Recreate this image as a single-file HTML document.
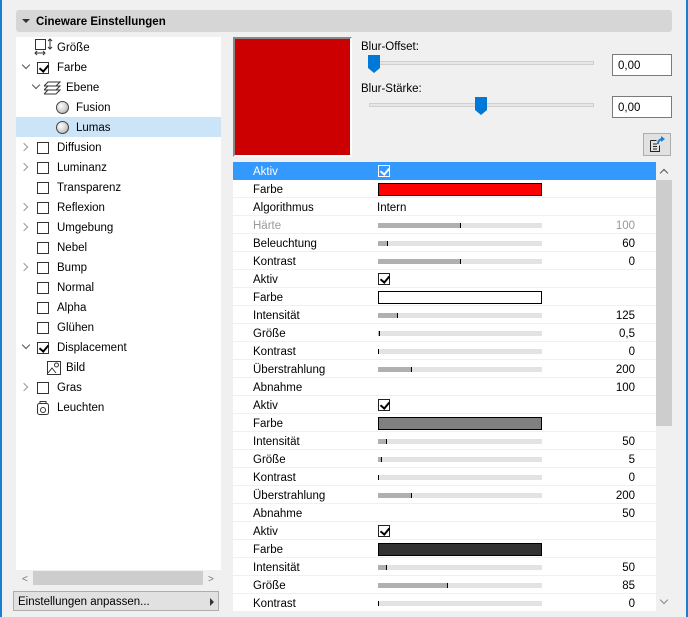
<!DOCTYPE html>
<html><head><meta charset="utf-8"><style>
*{margin:0;padding:0;box-sizing:border-box}
body{width:688px;height:617px;background:#f0f0f0;font-family:"Liberation Sans",sans-serif;font-size:11.5px;color:#000;position:relative;overflow:hidden}
.a{position:absolute}
.t{position:absolute;left:0;height:20px;line-height:22px;width:205px}
.cb{position:absolute;width:12px;height:12px;border:1px solid #333;background:#fff;top:5px}
.cb.c::after{content:"";position:absolute;left:3px;top:0px;width:4px;height:7px;border:solid #000;border-width:0 2px 2px 0;transform:rotate(40deg)}
.ar{position:absolute;top:7px;width:6px;height:6px;border:solid #999;border-width:0 1.5px 1.5px 0}
.r{position:absolute;left:0;width:423px;height:18px;line-height:20px;border-bottom:1px solid #f0f0f0}
.r .l{position:absolute;left:20px}
.r .n{position:absolute;right:21px}
.sl{position:absolute;left:145px;top:7px;width:164px;height:5px;background:#e3e3e3}
.sl i{position:absolute;left:0;top:0;height:5px;background:#b0b0b0;border-right:1px solid #000}
.cbs{position:absolute;left:145px;top:3px;width:12px;height:12px;border:1px solid #222;background:#fff}
.cbs::after{content:"";position:absolute;left:3px;top:0;width:4px;height:7px;border:solid #000;border-width:0 2px 2px 0;transform:rotate(40deg)}
.cbs.w{background:transparent;border-color:#fff}
.cbs.w::after{border-color:#fff}
.sw{position:absolute;left:145px;top:3px;width:164px;height:13px;border:1px solid #000}
</style></head><body>
<div class="a" style="left:0;top:0;width:2px;height:617px;background:#1a7fd4"></div>
<div class="a" style="left:686px;top:0;width:2px;height:617px;background:#1a7fd4"></div>
<div class="a" style="left:16px;top:10px;width:656px;height:22px;background:#d6d6d6;border-radius:3px"></div>
<div class="a" style="left:22px;top:19px;width:0;height:0;border-left:4px solid transparent;border-right:4px solid transparent;border-top:4px solid #333"></div>
<div class="a" style="left:36px;top:14px;font-weight:bold;line-height:16px">Cineware Einstellungen</div>

<div class="a" style="left:16px;top:37px;width:205px;height:533px;background:#fff">
<div class="t" style="top:0"><svg class="a" style="left:18px;top:1px" width="20" height="18"><rect x="1.5" y="1.5" width="10" height="10" fill="none" stroke="#333"/><path d="M16 1v10M14 3l2-2 2 2M14 9l2 2 2-2M1 15h10M3 13l-2 2 2 2M9 13l2 2-2 2" stroke="#333" fill="none"/></svg><span class="a" style="left:41px">Größe</span></div>
<div class="t" style="top:20px"><i class="ar" style="left:7px;top:5px;transform:rotate(45deg);border-color:#555"></i><i class="cb c" style="left:21px"></i><span class="a" style="left:41px">Farbe</span></div>
<div class="t" style="top:40px"><i class="ar" style="left:17px;top:5px;transform:rotate(45deg);border-color:#555"></i><svg class="a" style="left:28px;top:4px" width="18" height="14"><path d="M4 1h12l-4 4H0zM4 5h12l-4 4H0zM4 9h12l-4 4H0z" fill="#fff" stroke="#333"/></svg><span class="a" style="left:50px">Ebene</span></div>
<div class="t" style="top:60px"><i class="a" style="left:40px;top:4px;width:13px;height:13px;border-radius:50%;border:1px solid #444;background:radial-gradient(circle at 35% 35%,#fff,#ccc 60%,#888)"></i><span class="a" style="left:60px">Fusion</span></div>
<div class="t" style="top:80px;background:#cce4f7"><i class="a" style="left:40px;top:4px;width:13px;height:13px;border-radius:50%;border:1px solid #444;background:radial-gradient(circle at 35% 35%,#fff,#ccc 60%,#888)"></i><span class="a" style="left:60px">Lumas</span></div>
<div class="t" style="top:100px"><i class="ar" style="left:5px;transform:rotate(-45deg)"></i><i class="cb" style="left:21px"></i><span class="a" style="left:41px">Diffusion</span></div>
<div class="t" style="top:120px"><i class="ar" style="left:5px;transform:rotate(-45deg)"></i><i class="cb" style="left:21px"></i><span class="a" style="left:41px">Luminanz</span></div>
<div class="t" style="top:140px"><i class="cb" style="left:21px"></i><span class="a" style="left:41px">Transparenz</span></div>
<div class="t" style="top:160px"><i class="ar" style="left:5px;transform:rotate(-45deg)"></i><i class="cb" style="left:21px"></i><span class="a" style="left:41px">Reflexion</span></div>
<div class="t" style="top:180px"><i class="ar" style="left:5px;transform:rotate(-45deg)"></i><i class="cb" style="left:21px"></i><span class="a" style="left:41px">Umgebung</span></div>
<div class="t" style="top:200px"><i class="cb" style="left:21px"></i><span class="a" style="left:41px">Nebel</span></div>
<div class="t" style="top:220px"><i class="ar" style="left:5px;transform:rotate(-45deg)"></i><i class="cb" style="left:21px"></i><span class="a" style="left:41px">Bump</span></div>
<div class="t" style="top:240px"><i class="cb" style="left:21px"></i><span class="a" style="left:41px">Normal</span></div>
<div class="t" style="top:260px"><i class="cb" style="left:21px"></i><span class="a" style="left:41px">Alpha</span></div>
<div class="t" style="top:280px"><i class="cb" style="left:21px"></i><span class="a" style="left:41px">Glühen</span></div>
<div class="t" style="top:300px"><i class="ar" style="left:7px;top:5px;transform:rotate(45deg);border-color:#555"></i><i class="cb c" style="left:21px"></i><span class="a" style="left:41px">Displacement</span></div>
<div class="t" style="top:320px"><svg class="a" style="left:30px;top:3px" width="16" height="16"><rect x="1.5" y="1.5" width="13" height="13" fill="#fff" stroke="#333"/><circle cx="10.5" cy="5" r="2" fill="none" stroke="#333"/><path d="M2 13l4-5 4 5" fill="none" stroke="#333"/></svg><span class="a" style="left:50px">Bild</span></div>
<div class="t" style="top:340px"><i class="ar" style="left:5px;transform:rotate(-45deg)"></i><i class="cb" style="left:21px"></i><span class="a" style="left:41px">Gras</span></div>
<div class="t" style="top:360px"><svg class="a" style="left:20px;top:3px" width="14" height="16"><rect x="1.5" y="3.5" width="11" height="11" rx="2" fill="#fff" stroke="#333"/><path d="M4 3.5V1.5h6v2" fill="none" stroke="#333"/><circle cx="7" cy="10" r="2.5" fill="none" stroke="#333"/></svg><span class="a" style="left:41px">Leuchten</span></div>
</div>
<div class="a" style="left:16px;top:570px;width:205px;height:16px;background:#f0f0f0"></div>
<div class="a" style="left:33px;top:571px;width:170px;height:14px;background:#cdcdcd"></div>
<div class="a" style="left:22px;top:575px;color:#777;font-size:10px;line-height:10px">&lt;</div>
<div class="a" style="left:208px;top:575px;color:#777;font-size:10px;line-height:10px">&gt;</div>
<div class="a" style="left:13px;top:591px;width:206px;height:20px;background:#e1e1e1;border:1px solid #adadad;line-height:20px;padding-left:4px">Einstellungen anpassen...</div>
<div class="a" style="left:210px;top:598px;width:0;height:0;border-top:4px solid transparent;border-bottom:4px solid transparent;border-left:4px solid #333"></div>

<div class="a" style="left:233px;top:37px;width:119px;height:120px;background:#cc0000;border:2px solid #888;border-right-color:#fff;border-bottom-color:#fff"></div>
<div class="a" style="left:361px;top:40px;line-height:14px">Blur-Offset:</div>
<div class="a" style="left:369px;top:61px;width:225px;height:4px;background:#e6e6e6;border:1px solid #d0d0d0"></div>
<svg class="a" style="left:368px;top:55px" width="12" height="19"><path d="M0 0h12v13l-6 5-6-5z" fill="#0078d7"/></svg>
<div class="a" style="left:612px;top:54px;width:60px;height:22px;background:#fff;border:1px solid #7a7a7a;line-height:22px;padding-left:5px">0,00</div>
<div class="a" style="left:361px;top:82px;line-height:14px">Blur-Stärke:</div>
<div class="a" style="left:369px;top:103px;width:225px;height:4px;background:#e6e6e6;border:1px solid #d0d0d0"></div>
<svg class="a" style="left:475px;top:97px" width="12" height="19"><path d="M0 0h12v13l-6 5-6-5z" fill="#0078d7"/></svg>
<div class="a" style="left:612px;top:96px;width:60px;height:22px;background:#fff;border:1px solid #7a7a7a;line-height:22px;padding-left:5px">0,00</div>
<div class="a" style="left:643px;top:133px;width:28px;height:23px;background:#e1e1e1;border:1px solid #adadad"></div>
<svg class="a" style="left:648px;top:136px" width="18" height="18"><path d="M2.5 4.5h6M2.5 4.5v11h9v-6" fill="none" stroke="#222"/><path d="M5 8h4M5 10.5h4M5 13h4" stroke="#222"/><path d="M10 8c0-3 2-5 5-5" fill="none" stroke="#1a7fd4" stroke-width="2"/><path d="M13 0l4 3-4 3z" fill="#1a7fd4"/></svg>

<div class="a" style="left:233px;top:162px;width:423px;height:449px;background:#fff;overflow:hidden">
<div class="r" style="top:0;background:#3399ff;color:#fff;border:0"><span class="l">Aktiv</span><i class="cbs w"></i></div>
<div class="r" style="top:18px"><span class="l">Farbe</span><i class="sw" style="background:#ff0000"></i></div>
<div class="r" style="top:36px"><span class="l">Algorithmus</span><span class="a" style="left:144px">Intern</span></div>
<div class="r" style="top:54px;color:#999"><span class="l">Härte</span><i class="sl"><i style="width:83px"></i></i><span class="n">100</span></div>
<div class="r" style="top:72px"><span class="l">Beleuchtung</span><i class="sl"><i style="width:10px"></i></i><span class="n">60</span></div>
<div class="r" style="top:90px"><span class="l">Kontrast</span><i class="sl"><i style="width:83px"></i></i><span class="n">0</span></div>
<div class="r" style="top:108px"><span class="l">Aktiv</span><i class="cbs"></i></div>
<div class="r" style="top:126px"><span class="l">Farbe</span><i class="sw" style="background:#fff"></i></div>
<div class="r" style="top:144px"><span class="l">Intensität</span><i class="sl"><i style="width:20px"></i></i><span class="n">125</span></div>
<div class="r" style="top:162px"><span class="l">Größe</span><i class="sl"><i style="width:2px"></i></i><span class="n">0,5</span></div>
<div class="r" style="top:180px"><span class="l">Kontrast</span><i class="sl"><i style="width:1px"></i></i><span class="n">0</span></div>
<div class="r" style="top:198px"><span class="l">Überstrahlung</span><i class="sl"><i style="width:34px"></i></i><span class="n">200</span></div>
<div class="r" style="top:216px"><span class="l">Abnahme</span><span class="n">100</span></div>
<div class="r" style="top:234px"><span class="l">Aktiv</span><i class="cbs"></i></div>
<div class="r" style="top:252px"><span class="l">Farbe</span><i class="sw" style="background:#808080"></i></div>
<div class="r" style="top:270px"><span class="l">Intensität</span><i class="sl"><i style="width:9px"></i></i><span class="n">50</span></div>
<div class="r" style="top:288px"><span class="l">Größe</span><i class="sl"><i style="width:4px"></i></i><span class="n">5</span></div>
<div class="r" style="top:306px"><span class="l">Kontrast</span><i class="sl"><i style="width:1px"></i></i><span class="n">0</span></div>
<div class="r" style="top:324px"><span class="l">Überstrahlung</span><i class="sl"><i style="width:34px"></i></i><span class="n">200</span></div>
<div class="r" style="top:342px"><span class="l">Abnahme</span><span class="n">50</span></div>
<div class="r" style="top:360px"><span class="l">Aktiv</span><i class="cbs"></i></div>
<div class="r" style="top:378px"><span class="l">Farbe</span><i class="sw" style="background:#333"></i></div>
<div class="r" style="top:396px"><span class="l">Intensität</span><i class="sl"><i style="width:9px"></i></i><span class="n">50</span></div>
<div class="r" style="top:414px"><span class="l">Größe</span><i class="sl"><i style="width:70px"></i></i><span class="n">85</span></div>
<div class="r" style="top:432px"><span class="l">Kontrast</span><i class="sl"><i style="width:1px"></i></i><span class="n">0</span></div>
</div>
<div class="a" style="left:656px;top:162px;width:16px;height:449px;background:#f0f0f0"></div>
<div class="a" style="left:656px;top:180px;width:16px;height:246px;background:#cdcdcd"></div>
<div class="a" style="left:661px;top:170px;width:6px;height:6px;border:solid #555;border-width:1.5px 0 0 1.5px;transform:rotate(45deg)"></div>
<div class="a" style="left:661px;top:597px;width:6px;height:6px;border:solid #888;border-width:0 1.5px 1.5px 0;transform:rotate(45deg)"></div>
</body></html>
